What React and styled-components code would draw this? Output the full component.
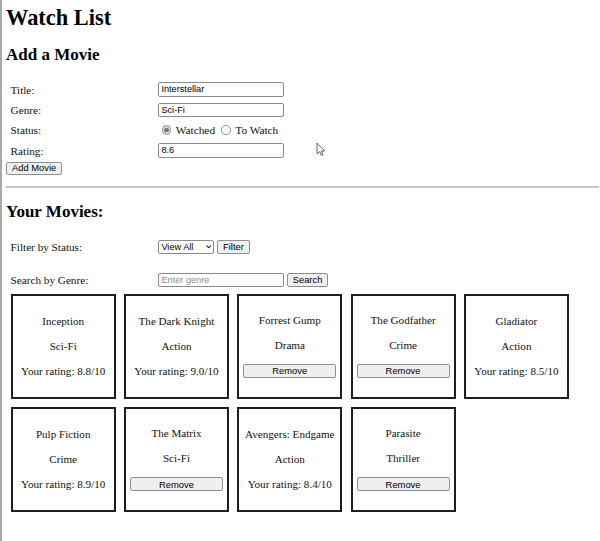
import React, { useState } from "react";
import styled, { createGlobalStyle } from "styled-components";

const GlobalStyle = createGlobalStyle`
  html, body {
    margin: 0;
    padding: 0;
    background: #fff;
  }
  body {
    font-family: "Liberation Serif", "Times New Roman", serif;
    color: #111;
  }
`;

// data
const movies = [
  { title: "Inception", genre: "Sci-Fi", rating: "8.8", watched: true },
  { title: "The Dark Knight", genre: "Action", rating: "9.0", watched: true },
  { title: "Forrest Gump", genre: "Drama", watched: false },
  { title: "The Godfather", genre: "Crime", watched: false },
  { title: "Gladiator", genre: "Action", rating: "8.5", watched: true },
  { title: "Pulp Fiction", genre: "Crime", rating: "8.9", watched: true },
  { title: "The Matrix", genre: "Sci-Fi", watched: false },
  { title: "Avengers: Endgame", genre: "Action", rating: "8.4", watched: true },
  { title: "Parasite", genre: "Thriller", watched: false },
];

const App = () => {
  const [status, setStatus] = useState("watched");
  const [form, setForm] = useState({
    title: "Interstellar",
    genre: "Sci-Fi",
    rating: "8.6",
  });

  const handleChange = (e) =>
    setForm((c) => ({ ...c, [e.target.name]: e.target.value }));

  return (
    <Page>
      <GlobalStyle />
      <Title>Watch List</Title>
      <Heading>Add a Movie</Heading>

      <FormGrid>
        <Label>Title:</Label>
        <div>
          <TextInput name="title" value={form.title} onChange={handleChange} />
        </div>
        <Label>Genre:</Label>
        <div>
          <TextInput name="genre" value={form.genre} onChange={handleChange} />
        </div>
        <Label>Status:</Label>
        <RadioGroup>
          <Radio
            type="radio"
            name="status"
            checked={status === "watched"}
            onChange={() => setStatus("watched")}
          />{" "}
          Watched{" "}
          <Radio
            type="radio"
            name="status"
            checked={status === "towatch"}
            onChange={() => setStatus("towatch")}
          />{" "}
          To Watch
        </RadioGroup>
        <Label>Rating:</Label>
        <div>
          <TextInput name="rating" value={form.rating} onChange={handleChange} />
        </div>
      </FormGrid>
      <SmallButton $top="1.2px" $h="13px">Add Movie</SmallButton>

      <Divider />

      <Heading $top="13.8px">Your Movies:</Heading>

      <ControlGrid>
        <Label>Filter by Status:</Label>
        <Controls>
          <SelectWrap>
            <Select defaultValue="all">
              <option value="all">View All</option>
              <option value="watched">Watched</option>
              <option value="towatch">To Watch</option>
            </Select>
            <Chevron viewBox="0 0 6 4">
              <path d="M0.6 0.6 L3 3 L5.4 0.6" />
            </Chevron>
          </SelectWrap>
          <SmallButton>Filter</SmallButton>
        </Controls>
        <Label>Search by Genre:</Label>
        <Controls>
          <TextInput placeholder="Enter genre" />
          <SmallButton>Search</SmallButton>
        </Controls>
      </ControlGrid>

      <CardGrid>
        {movies.map((m, i) => (
          <Card key={i}>
            <CardText>{m.title}</CardText>
            <CardText>{m.genre}</CardText>
            {m.watched ? (
              <CardText>Your rating: {m.rating}/10</CardText>
            ) : (
              <RemoveButton>Remove</RemoveButton>
            )}
          </Card>
        ))}
      </CardGrid>

      {/* mouse pointer left in the capture */}
      <Cursor viewBox="0 0 10 15">
        <path d="M1 1 L1 12 L3.6 9.6 L5.4 13.6 L7 12.9 L5.3 9 L8.8 9 Z" />
      </Cursor>
    </Page>
  );
};

export default App;

// ============================================================
// style:

const Page = styled.div`
  position: relative;
  box-sizing: border-box;
  min-height: 100vh;
  border-left: 2px solid #a9a9a9;
  padding: 5px 1px 20px 4px;
`;

const Title = styled.h1`
  margin: 0;
  font-size: 22.4px;
  line-height: 25px;
  font-weight: bold;
  color: #000;
`;

const Heading = styled.h2`
  margin: ${(p) => p.$top || "15.2px"} 0 0;
  font-size: 17px;
  line-height: 19.5px;
  font-weight: bold;
  color: #000;
`;

const FormGrid = styled.div`
  display: grid;
  grid-template-columns: 147.8px auto;
  grid-auto-rows: 20.3px;
  align-items: center;
  margin: 14.6px 0 0 4.6px;
`;

const ControlGrid = styled(FormGrid)`
  row-gap: 12.9px;
  margin-top: 14.85px;
`;

const Label = styled.span`
  font-size: 11.2px;
  line-height: 13px;
  padding-top: 1.5px;
`;

const TextInput = styled.input`
  box-sizing: border-box;
  display: block;
  width: 125.7px;
  height: 14.4px;
  margin: 0;
  padding: 0 2px;
  border: 1px solid #8a8a8a;
  border-radius: 2px;
  background: #fff;
  font-family: "Liberation Sans", Arial, sans-serif;
  font-size: 9.2px;
  color: #000;
  outline: none;

  &::placeholder {
    color: #8d8d8d;
  }
`;

const RadioGroup = styled.div`
  display: block;
  white-space: nowrap;
  font-size: 11.3px;
  line-height: 13px;
  padding-top: 1px;
`;

const Radio = styled.input`
  appearance: none;
  box-sizing: border-box;
  display: inline-block;
  vertical-align: -0.5px;
  width: 9.4px;
  height: 9.4px;
  margin: 0 1.8px 0 3.6px;
  border: 1px solid #8c8c8c;
  border-radius: 50%;
  background: #fff;

  &:checked {
    background: radial-gradient(circle, #7c7c7c 0 2.1px, #d9d9d9 2.6px);
  }
`;

const SmallButton = styled.button`
  box-sizing: border-box;
  display: block;
  height: ${(p) => p.$h || "14px"};
  margin: ${(p) => p.$top || "0"} 0 0;
  padding: 0 5px;
  border: 1px solid #8f8f8f;
  border-radius: 2px;
  background: #efefef;
  font-family: "Liberation Sans", Arial, sans-serif;
  font-size: 9.4px;
  line-height: 1;
  color: #000;
`;

const Divider = styled.hr`
  margin: 11.7px 0 0 0;
  height: 0;
  border: none;
  border-top: 2px solid #c7c7c7;
`;

const Controls = styled.div`
  display: flex;
  align-items: center;
  gap: 2.6px;
`;

const SelectWrap = styled.span`
  position: relative;
  display: block;
`;

const Select = styled.select`
  appearance: none;
  box-sizing: border-box;
  display: block;
  width: 56px;
  height: 14px;
  margin: 0;
  padding: 0 0 0 2px;
  border: 1px solid #8a8a8a;
  border-radius: 2px;
  background: #fff;
  font-family: "Liberation Sans", Arial, sans-serif;
  font-size: 9.2px;
  color: #000;
  outline: none;
`;

const Chevron = styled.svg`
  position: absolute;
  right: 2.8px;
  top: 5.2px;
  width: 5.4px;
  height: 3.6px;
  pointer-events: none;
  fill: none;
  stroke: #222;
  stroke-width: 1.2;
`;

const CardGrid = styled.div`
  display: flex;
  flex-wrap: wrap;
  gap: 8.3px;
  margin: 3.7px 0 0 4.7px;
`;

const Card = styled.div`
  box-sizing: border-box;
  width: 105px;
  height: 105px;
  border: 2px solid #1e1e1e;
  padding: 0 4px;
  display: flex;
  flex-direction: column;
  align-items: center;
  justify-content: center;
  gap: 12px;
  text-align: center;
`;

const CardText = styled.p`
  margin: 0;
  font-size: 11.1px;
  line-height: 12.8px;
  white-space: nowrap;
`;

const RemoveButton = styled(SmallButton)`
  width: 100%;
  height: 14.4px;
`;

const Cursor = styled.svg`
  position: absolute;
  left: 314px;
  top: 142px;
  width: 10px;
  height: 15px;
  fill: #fff;
  stroke: #555;
  stroke-width: 0.9;
  stroke-linejoin: round;
`;
